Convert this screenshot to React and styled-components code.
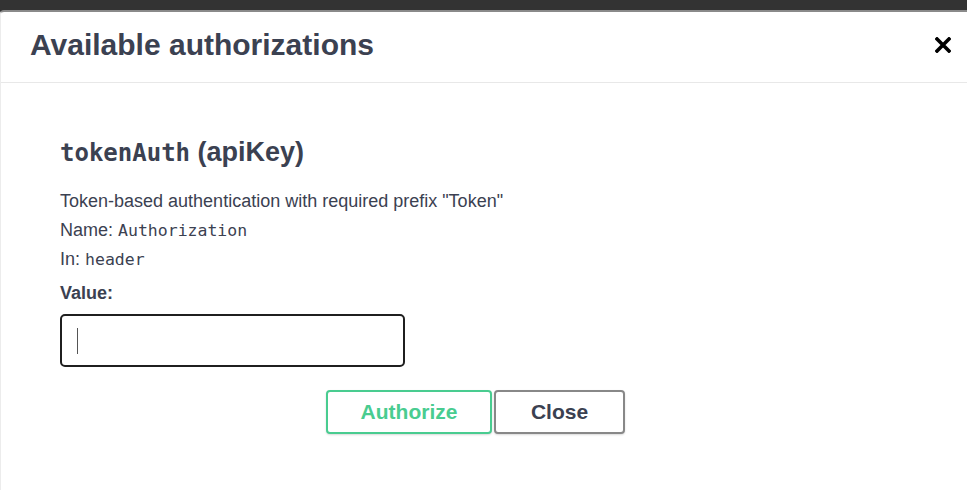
import React from "react";
import styled, { createGlobalStyle } from "styled-components";

const GlobalStyle = createGlobalStyle`
  html, body {
    margin: 0;
    padding: 0;
    background: #333333;
    overflow: hidden;
  }
  body {
    font-family: "Liberation Sans", Arial, sans-serif;
    color: #3b4151;
  }
`;

const Backdrop = styled.div`
  width: 967px;
  height: 490px;
  padding-top: 10px;
  box-sizing: border-box;
  overflow: hidden;
`;

const Modal = styled.div`
  width: 980px;
  height: 490px;
  background: #fff;
  border-radius: 4px 0 0 0;
  border-left: 1px solid #ececec;
  border-top: 2px solid #8a8a8a;
  box-sizing: border-box;
`;

const Header = styled.div`
  display: flex;
  align-items: center;
  justify-content: space-between;
  height: 71px;
  padding: 0 30px 4px 29px;
  box-sizing: border-box;
  border-bottom: 1px solid #e8e8e8;
`;

const Title = styled.h3`
  margin: 0;
  font-size: 30px;
  line-height: 34px;
  font-weight: 700;
  color: #3b4151;
`;

const CloseIcon = styled.button`
  display: flex;
  align-items: center;
  justify-content: center;
  width: 20px;
  height: 20px;
  margin-right: -3px;
  padding: 0;
  border: none;
  background: none;
`;

const Content = styled.div`
  padding: 54px 30px 0 59px;
`;

const SchemeTitle = styled.h4`
  margin: 0 0 20px;
  font-size: 27px;
  font-weight: 700;
  color: #3b4151;
  line-height: 30px;
`;

const Code = styled.code`
  font-family: "DejaVu Sans Mono", monospace;
  font-size: 24px;
  font-weight: 700;
  line-height: 1;
`;

const Line = styled.p`
  margin: 0;
  font-size: 18px;
  line-height: 29px;
  color: #3b4151;
`;

const Mono = styled.code`
  font-family: "DejaVu Sans Mono", monospace;
  font-size: 16.5px;
  line-height: 1;
`;

const Label = styled.label`
  display: block;
  margin-top: 9px;
  font-size: 18px;
  font-weight: 700;
  line-height: 20px;
`;

const Input = styled.div`
  display: flex;
  align-items: center;
  width: 345px;
  height: 53px;
  margin-top: 11px;
  padding-left: 15px;
  box-sizing: border-box;
  border: 2px solid #1f1f1f;
  border-radius: 5px;
`;

const Caret = styled.span`
  width: 1px;
  height: 26px;
  background: #555;
`;

const Actions = styled.div`
  display: flex;
  justify-content: center;
  gap: 2px;
  margin-top: 23px;
  padding-right: 59px;
`;

const Button = styled.button`
  width: ${(p) => p.$w}px;
  height: 44px;
  font-family: "Liberation Sans", Arial, sans-serif;
  font-size: 21px;
  font-weight: 700;
  background: #fff;
  border: 2px solid ${(p) => p.$border};
  color: ${(p) => p.$color};
  border-radius: 4px;
  box-shadow: 0 1px 2px rgba(0, 0, 0, 0.15);
`;

export default function App() {
  return (
    <Backdrop>
      <GlobalStyle />
      <Modal>
        <Header>
          <Title>Available authorizations</Title>
          <CloseIcon aria-label="Close">
            <svg width="16" height="16" viewBox="0 0 16 16">
              <path
                d="M2 2 L14 14 M14 2 L2 14"
                stroke="#000"
                strokeWidth="3.6"
                strokeLinecap="square"
              />
            </svg>
          </CloseIcon>
        </Header>
        <Content>
          <SchemeTitle>
            <Code>tokenAuth</Code> (apiKey)
          </SchemeTitle>
          <Line>Token-based authentication with required prefix "Token"</Line>
          <Line>
            Name: <Mono>Authorization</Mono>
          </Line>
          <Line>
            In: <Mono>header</Mono>
          </Line>
          <Label>Value:</Label>
          <Input>
            <Caret />
          </Input>
          <Actions>
            <Button $w={166} $border="#49cc90" $color="#49cc90">
              Authorize
            </Button>
            <Button $w={131} $border="#888" $color="#3b4151">
              Close
            </Button>
          </Actions>
        </Content>
      </Modal>
    </Backdrop>
  );
}
